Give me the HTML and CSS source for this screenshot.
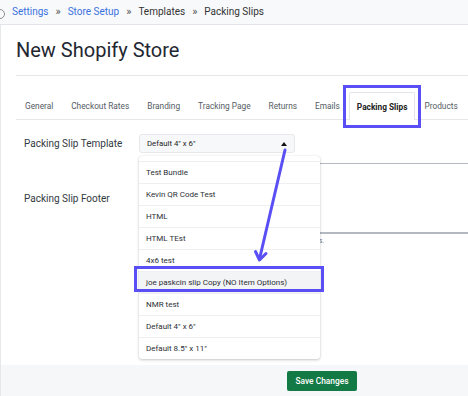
FILE: index.html
```html
<!DOCTYPE html>
<html lang="en">
<head>
<meta charset="utf-8">
<title>Packing Slips</title>
<link rel="stylesheet" href="styles.css">
</head>
<body>
<div class="page">
  <header class="crumbs">
    <span class="crumb-icon"></span>
    <a class="crumb-link" href="#">Settings</a>
    <span class="sep">»</span>
    <a class="crumb-link" href="#">Store Setup</a>
    <span class="sep">»</span>
    <span class="crumb-text">Templates</span>
    <span class="sep">»</span>
    <span class="crumb-text">Packing Slips</span>
  </header>

  <main class="card">
    <h1 class="title">New Shopify Store</h1>
    <nav class="tabs">
      <span class="tab">General</span>
      <span class="tab">Checkout Rates</span>
      <span class="tab">Branding</span>
      <span class="tab">Tracking Page</span>
      <span class="tab">Returns</span>
      <span class="tab">Emails</span>
      <span class="tab tab-active">Packing Slips</span>
      <span class="tab">Products</span>
    </nav>

    <section class="form">
      <div class="row">
        <label class="label">Packing Slip Template</label>
        <div class="select-wrap">
          <div class="select">
            <span>Default 4" x 6"</span>
            <span class="caret"></span>
          </div>
          <ul class="dropdown">
            <li class="opt">Test Bundle</li>
            <li class="opt">Kevin QR Code Test</li>
            <li class="opt">HTML</li>
            <li class="opt">HTML TEst</li>
            <li class="opt">4x6 test</li>
            <li class="opt opt-hover">joe paskcin slip Copy (NO Item Options)</li>
            <li class="opt">NMR test</li>
            <li class="opt">Default 4" x 6"</li>
            <li class="opt">Default 8.5" x 11"</li>
          </ul>
        </div>
      </div>
      <div class="row row-footer">
        <label class="label label-footer">Packing Slip Footer</label>
        <div class="field">
          <div class="textarea"></div>
          <p class="help">s.</p>
        </div>
      </div>
    </section>
  </main>

  <footer class="actions">
    <button class="save" type="button">Save Changes</button>
  </footer>

  <div class="mark mark-tab"></div>
  <div class="mark mark-item"></div>
  <svg class="arrow" width="468" height="396" viewBox="0 0 468 396">
    <path d="M285 150 L259.5 259" fill="none" stroke="#5a4ff4" stroke-width="3" stroke-linecap="round"/>
    <path d="M255.5 251.5 L259.5 260 L266 253.5" fill="none" stroke="#5a4ff4" stroke-width="3" stroke-linecap="round" stroke-linejoin="round"/>
  </svg>
</div>
</body>
</html>
```
FILE: styles.css
```css
* { box-sizing: border-box; }
html, body { margin: 0; padding: 0; }
body {
  font-family: Roboto, "Liberation Sans", sans-serif;
  color: #333;
  background: #fff;
  width: 468px;
  height: 396px;
  overflow: hidden;
}
.page {
  position: relative;
  display: flex;
  flex-direction: column;
  height: 396px;
  overflow: hidden;
}
.crumbs {
  height: 25px;
  display: flex;
  align-items: center;
  background: #f8f9fb;
  border-bottom: 1px solid #e2e5ea;
  font-size: 10px;
  padding-bottom: 1px;
}
.crumb-icon {
  width: 10px;
  height: 10px;
  border: 1px solid #8a8f96;
  border-radius: 50%;
  margin-left: -5px;
  margin-right: 7px;
  margin-top: 4px;
  flex: none;
}
.crumb-link { color: #3b73de; text-decoration: none; }
.crumb-text { color: #333; }
.sep { color: #555; margin: 0 7px; font-size: 11px; }

.card {
  flex: 1;
  border-left: 1px solid #e6e8eb;
  padding-left: 15px;
  display: flex;
  flex-direction: column;
  min-width: 0;
}
.title {
  margin: 0;
  padding-top: 13px;
  height: 51px;
  font-size: 20px;
  font-weight: 400;
  line-height: 24px;
  color: #1f2731;
  border-bottom: 1px solid #e5e7eb;
}
.tabs {
  display: flex;
  align-items: flex-end;
  height: 44px;
  padding-top: 16px;
  border-bottom: 1px solid #e5e7eb;
}
.tab {
  height: 27px;
  display: flex;
  align-items: center;
  padding: 0 8px;
  font-size: 8.3px;
  color: #555b63;
  white-space: nowrap;
  border: 1px solid transparent;
  border-bottom: none;
}
.tab-active {
  padding: 0 7px;
  border-color: #e2e5ea;
  border-radius: 2px 2px 0 0;
  background: #fff;
  color: #222;
  font-weight: 700;
  margin-bottom: -1px;
  height: 28px;
}
.form {
  padding-top: 14px;
  padding-left: 8px;
  display: flex;
  flex-direction: column;
  gap: 10px;
}
.row {
  display: flex;
  align-items: center;
}
.row-footer { align-items: flex-start; }
.label {
  width: 115px;
  flex: none;
  font-size: 10px;
  color: #333a42;
}
.label-footer {
  height: 71px;
  display: flex;
  align-items: center;
}
.select-wrap {
  position: relative;
}
.select {
  width: 156px;
  height: 19px;
  background: #f7f8fa;
  border: 1px solid #e6e8eb;
  border-radius: 3px;
  display: flex;
  align-items: center;
  justify-content: space-between;
  padding: 0 7px;
  font-size: 7.8px;
  color: #222;
}
.caret {
  width: 0;
  height: 0;
  border-left: 3px solid transparent;
  border-right: 3px solid transparent;
  border-bottom: 4px solid #111;
}
.dropdown {
  position: absolute;
  z-index: 5;
  top: 22px;
  left: 0;
  width: 181px;
  margin: 0;
  padding: 5px 0 0 0;
  list-style: none;
  background: #fff;
  border-radius: 3px;
  box-shadow: 0 1px 3px rgba(0, 0, 0, 0.22), 0 0 1px rgba(0, 0, 0, 0.12);
}
.opt {
  height: 22px;
  display: flex;
  align-items: center;
  padding-left: 7px;
  font-size: 8px;
  color: #2b2f35;
  border-top: 1px solid #eeeff1;
  white-space: nowrap;
}
.opt-hover { background: #f3f4f6; }
.field {
  flex: 1;
  display: flex;
  flex-direction: column;
}
.textarea {
  width: 400px;
  height: 71px;
  border: 1px solid #b4b9c1;
  border-bottom-width: 2px;
  border-radius: 2px;
}
.help {
  margin: 3px 0 0 0;
  padding-left: 180px;
  font-size: 6.4px;
  color: #777;
  white-space: nowrap;
}
.actions {
  height: 31px;
  flex: none;
  background: #f6f7f9;
  border-left: 1px solid #e6e8eb;
  display: flex;
  align-items: center;
  padding-left: 286px;
}
.save {
  width: 70px;
  height: 20px;
  border: none;
  border-radius: 2px;
  background: #137a45;
  color: #fff;
  font-family: Roboto, "Liberation Sans", sans-serif;
  font-size: 8.4px;
  font-weight: 500;
  padding: 0;
}
.mark {
  position: absolute;
  border: 3px solid #5a4ff4;
  z-index: 8;
}
.mark-tab { left: 343px; top: 85px; width: 78px; height: 43px; }
.mark-item { left: 134px; top: 266px; width: 190px; height: 26px; }
.arrow {
  position: absolute;
  left: 0;
  top: 0;
  z-index: 9;
  pointer-events: none;
}
```
